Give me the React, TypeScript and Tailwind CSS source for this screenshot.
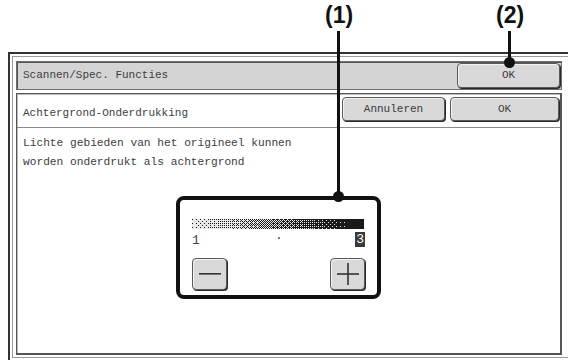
import React from "react";

const BAYER = [
  [0, 8, 2, 10],
  [12, 4, 14, 6],
  [3, 11, 1, 9],
  [15, 7, 13, 5],
];

function DitherBar() {
  const W = 172;
  const H = 10;
  const rects: React.ReactElement[] = [];
  for (let y = 0; y < H; y++) {
    let start = -1;
    for (let x = 0; x <= W; x++) {
      const t = x < W ? (x / W) * 1.02 + 0.06 : -1;
      const on = x < W && t * 16 > BAYER[y % 4][x % 4] + 0.5;
      if (on && start < 0) start = x;
      if (!on && start >= 0) {
        rects.push(<rect key={`${y}-${start}`} x={start} y={y} width={x - start} height={1} fill="#1a1a1a" />);
        start = -1;
      }
    }
  }
  return (
    <svg width={W} height={H} viewBox={`0 0 ${W} ${H}`} shapeRendering="crispEdges" className="block">
      <rect x={0} y={0} width={W} height={H} fill="#e8e8e8" />
      {rects}
    </svg>
  );
}

function Btn({ children, className }: { children: React.ReactNode; className: string }) {
  return (
    <div
      className={`flex items-center justify-center rounded-[4px] border border-[#5a5a5a] bg-[#d9d9d9] text-[11px] text-[#3a3a3a] shadow-[1px_1px_0_#2a2a2a,inset_1px_1px_0_#f2f2f2] ${className}`}
    >
      {children}
    </div>
  );
}

export default function App() {
  return (
    <div className="relative h-[360px] w-[568px] overflow-hidden bg-white font-['Liberation_Mono',monospace]">
      <div className="pl-[8px] pt-[52px]">
        {/* outer frame */}
        <div className="h-[310px] w-[580px] border-2 border-[#333] p-[2px]">
          <div className="h-full w-full border border-[#9a9a9a] pl-[3px] pt-[4px]">
            <div className="flex w-[546px] flex-col">
              {/* title bar */}
              <div className="flex h-[29px] items-center justify-between border border-[#6d6d6d] bg-[#d4d4d4] pl-[6px] pr-[1px] shadow-[inset_1px_1px_0_#555]">
                <span className="text-[11px] text-[#3d3d3d]">Scannen/Spec. Functies</span>
                <Btn className="h-[25px] w-[103px]">OK</Btn>
              </div>
              {/* content panel */}
              <div className="mt-[3px] flex h-[262px] flex-col border border-[#555] border-b-2 border-r-2 bg-white shadow-[inset_1px_1px_0_#bbb]">
                <div className="flex h-[34px] items-start border-b border-[#8a8a8a]">
                  <div className="flex-1 pl-[6px] pt-[13px] text-[11px] leading-[12px] text-[#3d3d3d]">
                    Achtergrond-Onderdrukking
                  </div>
                  <div className="flex gap-[5px] pr-[1px] pt-[3px]">
                    <Btn className="h-[24px] w-[103px]">Annuleren</Btn>
                    <Btn className="h-[24px] w-[109px]">OK</Btn>
                  </div>
                </div>
                <div className="pl-[6px] pt-[6px] text-[11.2px] leading-[19px] text-[#3d3d3d]">
                  <div>Lichte gebieden van het origineel kunnen</div>
                  <div>worden onderdrukt als achtergrond</div>
                </div>
                {/* slider area (callout 1) */}
                <div className="ml-[159px] mt-[24px] h-[103px] w-[205px] rounded-[8px] border-[4px] border-[#111] px-[12px] pt-[19px]">
                  <DitherBar />
                  <div className="relative mt-[2px] h-[17px] text-[13px] leading-[15px] text-[#444]">
                    <span className="absolute left-0 top-[2px]">1</span>
                    <span className="absolute left-[83px] top-[-3px]">.</span>
                    <span className="absolute right-0 top-[1px] bg-[#3a3a3a] px-[1px] text-white">3</span>
                  </div>
                  <div className="mt-[10px] flex justify-between">
                    <Btn className="h-[32px] w-[35px]">
                      <svg width="22" height="4" viewBox="0 0 22 4">
                        <rect x="0" y="1" width="22" height="1.6" fill="#333" />
                      </svg>
                    </Btn>
                    <Btn className="h-[32px] w-[35px]">
                      <svg width="22" height="22" viewBox="0 0 22 22">
                        <rect x="0" y="10.2" width="22" height="1.6" fill="#333" />
                        <rect x="10.2" y="0" width="1.6" height="22" fill="#333" />
                      </svg>
                    </Btn>
                  </div>
                </div>
              </div>
            </div>
          </div>
        </div>
      </div>

      {/* callout annotations */}
      <div className="absolute left-[325px] top-[2px] font-['Liberation_Sans',sans-serif] text-[23px] font-bold leading-[26px] text-[#111]">
        (1)
      </div>
      <div className="absolute left-[337px] top-[31px] h-[165px] w-[3px] bg-[#111]" />
      <div className="absolute left-[333px] top-[191px] h-[11px] w-[11px] rounded-full bg-[#111]" />

      <div className="absolute left-[496px] top-[2px] font-['Liberation_Sans',sans-serif] text-[23px] font-bold leading-[26px] text-[#111]">
        (2)
      </div>
      <div className="absolute left-[508px] top-[31px] h-[30px] w-[3px] bg-[#111]" />
      <div className="absolute left-[504px] top-[57px] h-[11px] w-[11px] rounded-full bg-[#111]" />
    </div>
  );
}
